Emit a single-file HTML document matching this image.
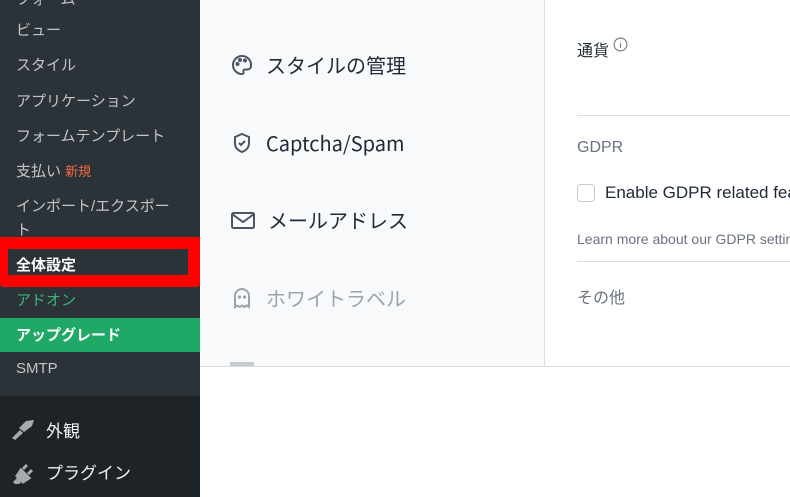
<!DOCTYPE html>
<html><head><meta charset="utf-8"><style>
body{margin:0;width:790px;height:497px;position:relative;overflow:hidden;background:#fff;font-family:"Liberation Sans","Noto Sans CJK JP",sans-serif}
.sb{position:absolute;left:0;top:0;width:200px;height:497px;background:#1d2327;overflow:hidden}
.sub{position:absolute;left:0;top:0;width:200px;height:396px;background:#2c3338}
.it{position:absolute;left:16px;font-size:15px;color:#c3c4c7;white-space:nowrap}
.nav{position:absolute;left:200px;top:0;width:344px;height:366px;background:#f8f9fb;border-right:1px solid #dcdde1;overflow:hidden}
.ni{position:absolute;left:30px;font-size:20px;color:#1f2937;display:flex;align-items:center;gap:12px;font-family:"Noto Sans CJK JP",sans-serif;white-space:nowrap}
.hr{position:absolute;left:32px;right:0;height:1px;background:#dcdde1}
.rt{position:absolute;left:545px;top:0;width:245px;height:366px;overflow:hidden}
.rt div{white-space:nowrap}
</style></head><body>
<div class="sb"><div class="sub"></div>
<div class="it" style="top:-12px">フォーム</div>
<div class="it" style="top:19px">ビュー</div>
<div class="it" style="top:54px">スタイル</div>
<div class="it" style="top:90px">アプリケーション</div>
<div class="it" style="top:125px">フォームテンプレート</div>
<div class="it" style="top:160px">支払い <span style="color:#f0683e;font-size:13px">新規</span></div>
<div class="it" style="top:195px;line-height:24px">インポート/エクスポー<br>ト</div>
<div style="position:absolute;left:0;top:237px;width:200px;height:50px;background:#f00;border-radius:0 0 4px 4px"></div>
<div style="position:absolute;left:8px;top:249px;width:180px;height:26px;background:#2c3338"></div>
<div class="it" style="top:254px;color:#fff;font-weight:bold">全体設定</div>
<div class="it" style="top:289px;color:#3ab67a">アドオン</div>
<div style="position:absolute;left:0;top:318px;width:200px;height:34px;background:#1fa866"></div>
<div class="it" style="top:324px;color:#fff;font-weight:bold">アップグレード</div>
<div class="it" style="top:360px">SMTP</div>
<svg style="position:absolute;left:10px;top:418px" width="26" height="22" viewBox="0 0 26 22"><path d="M2 20 L10 12 L13 15 L5 22Z M9 10 L16 3 L24 2 L22 8 L14 14Z" fill="#a7aaad"/></svg>
<div class="it" style="top:417px;left:46px;font-size:17px;color:#f0f0f1">外観</div>
<svg style="position:absolute;left:11px;top:460px" width="24" height="24" viewBox="0 0 24 24"><path d="M4 22 L8 18 L6 16 L10 10 L18 18 L12 22 L10 20 L6 24Z M12 9 L16 5 M17 14 L21 10" stroke="#a7aaad" stroke-width="3" fill="#a7aaad"/></svg>
<div class="it" style="top:459px;left:46px;font-size:17px;color:#f0f0f1">プラグイン</div>
</div>
<div class="nav">
<div class="ni" style="top:50px"><svg width="24" height="24" viewBox="0 0 24 24" fill="none" stroke="#4b5563" stroke-width="2"><path d="M12 3a9 9 0 1 0 0 18c1.5 0 2-1 1.5-2s0-2.5 1.5-2.5h2.5A3.5 3.5 0 0 0 21 13 9 9 0 0 0 12 3z"/><circle cx="7.5" cy="11" r="1" fill="#4b5563"/><circle cx="10" cy="7" r="1" fill="#4b5563"/><circle cx="15" cy="7.5" r="1" fill="#4b5563"/></svg>スタイルの管理</div>
<div class="ni" style="top:128px"><svg width="24" height="24" viewBox="0 0 24 24" fill="none" stroke="#4b5563" stroke-width="2"><path d="M12 3l7 3v6c0 4.5-3 7.5-7 9-4-1.5-7-4.5-7-9V6z"/><path d="M9 12l2 2 4-4"/></svg>Captcha/Spam</div>
<div class="ni" style="top:205px"><svg width="26" height="24" viewBox="0 0 26 24" fill="none" stroke="#4b5563" stroke-width="2"><rect x="2" y="5" width="22" height="15" rx="1.5"/><path d="M2 6l11 8 11-8"/></svg>メールアドレス</div>
<div class="ni" style="top:283px;color:#9ca3af"><svg width="24" height="24" viewBox="0 0 24 24" fill="none" stroke="#9ca3af" stroke-width="2"><path d="M5 21V10a7 7 0 0 1 14 0v11l-2.3-1.5-2.3 1.5-2.4-1.5-2.3 1.5-2.4-1.5z"/><circle cx="9.5" cy="11" r=".6" fill="#9ca3af"/><circle cx="14.5" cy="11" r=".6" fill="#9ca3af"/></svg>ホワイトラベル</div>
<div style="position:absolute;left:30px;top:362px;width:24px;height:4px;background:#c7cbd1"></div>
</div>
<div style="position:absolute;left:200px;right:0;top:366px;height:1px;background:#dcdde1"></div>
<div class="rt">
<div style="position:absolute;left:32px;top:37px;font-size:16px;color:#1f2937;font-family:'Noto Sans CJK JP',sans-serif">通貨 <svg width="15" height="15" viewBox="0 0 14 14" style="vertical-align:4px"><circle cx="7" cy="7" r="6" fill="none" stroke="#6b7280"/><path d="M7 6v4M7 4v.5" stroke="#6b7280"/></svg></div>
<div class="hr" style="top:115px"></div>
<div style="position:absolute;left:32px;top:139px;font-size:16px;color:#6b7280">GDPR</div>
<div style="position:absolute;left:32px;top:184px;width:16px;height:16px;border:1px solid #c7cbd1;border-radius:4px;background:#fff"></div>
<div style="position:absolute;left:60px;top:183px;font-size:17px;color:#1f2937">Enable GDPR related features</div>
<div style="position:absolute;left:32px;top:231px;font-size:14px;color:#6b7280">Learn more about our GDPR settings</div>
<div class="hr" style="top:261px"></div>
<div style="position:absolute;left:32px;top:284px;font-size:16px;color:#6b7280;font-family:'Noto Sans CJK JP',sans-serif">その他</div>
</div>
</body></html>
